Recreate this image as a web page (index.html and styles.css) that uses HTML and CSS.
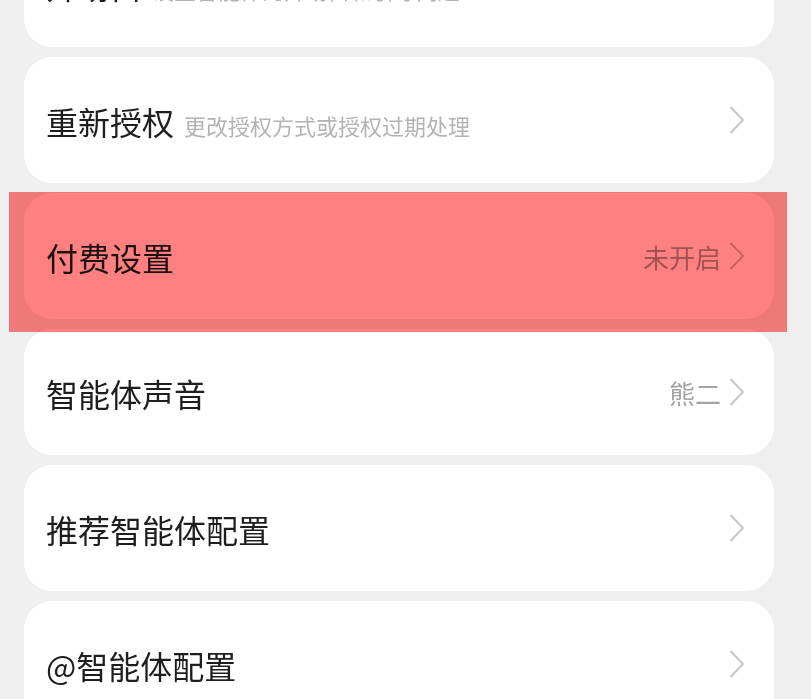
FILE: index.html
```html
<!DOCTYPE html>
<html lang="zh-CN">
<head>
<meta charset="utf-8">
<title>设置</title>
<link rel="stylesheet" href="styles.css">
</head>
<body>
<div class="page">
  <ul class="list">
    <li class="card">
      <div class="label"><span class="title">开场白</span><span class="sub">设置智能体的开场白和引导问题</span></div>
      <div class="right"><svg class="chev" viewBox="0 0 16 28"><polyline points="2,1.5 14,14 2,26.5"/></svg></div>
    </li>
    <li class="card">
      <div class="label"><span class="title">重新授权</span><span class="sub">更改授权方式或授权过期处理</span></div>
      <div class="right"><svg class="chev" viewBox="0 0 16 28"><polyline points="2,1.5 14,14 2,26.5"/></svg></div>
    </li>
    <li class="card">
      <div class="label"><span class="title">付费设置</span></div>
      <div class="right"><span class="value">未开启</span><svg class="chev" viewBox="0 0 16 28"><polyline points="2,1.5 14,14 2,26.5"/></svg></div>
    </li>
    <li class="card">
      <div class="label"><span class="title">智能体声音</span></div>
      <div class="right"><span class="value">熊二</span><svg class="chev" viewBox="0 0 16 28"><polyline points="2,1.5 14,14 2,26.5"/></svg></div>
    </li>
    <li class="card">
      <div class="label"><span class="title">推荐智能体配置</span></div>
      <div class="right"><svg class="chev" viewBox="0 0 16 28"><polyline points="2,1.5 14,14 2,26.5"/></svg></div>
    </li>
    <li class="card">
      <div class="label"><span class="title">@智能体配置</span></div>
      <div class="right"><svg class="chev" viewBox="0 0 16 28"><polyline points="2,1.5 14,14 2,26.5"/></svg></div>
    </li>
  </ul>
  <div class="highlight"></div>
</div>
</body>
</html>
```

FILE: styles.css
```css
html, body {
  margin: 0;
  padding: 0;
  background: #efefef;
  height: 100%;
  overflow: hidden;
}
body {
  font-family: "Noto Sans CJK SC", "Noto Sans", sans-serif;
}
.page {
  position: relative;
  height: 699px;
  overflow: hidden;
}
.list {
  list-style: none;
  margin: -79px 0 0 0;
  padding: 0 0 0 24px;
  display: flex;
  flex-direction: column;
  gap: 10px;
}
.card {
  width: 750px;
  height: 126px;
  box-sizing: border-box;
  background: #ffffff;
  border-radius: 28px;
  padding: 0 29px 0 22px;
  display: flex;
  align-items: center;
  justify-content: space-between;
}
.label {
  display: flex;
  align-items: baseline;
  gap: 10px;
  padding-top: 2px;
}
.title {
  font-size: 32px;
  color: #1e1e1e;
  line-height: 1;
}
.sub {
  font-size: 22px;
  color: #b3b3b3;
  line-height: 1;
}
.right {
  display: flex;
  align-items: center;
  gap: 8px;
}
.value {
  font-size: 26px;
  color: #a3a3a3;
  line-height: 1;
  padding-top: 2px;
}
.chev {
  width: 16px;
  height: 28px;
  display: block;
}
.chev polyline {
  fill: none;
  stroke: #c6c6c6;
  stroke-width: 2;
  stroke-linecap: round;
  stroke-linejoin: round;
}
.highlight {
  position: absolute;
  left: 9px;
  top: 192px;
  width: 778px;
  height: 140px;
  background: #ff8080;
  mix-blend-mode: multiply;
  pointer-events: none;
}
```
